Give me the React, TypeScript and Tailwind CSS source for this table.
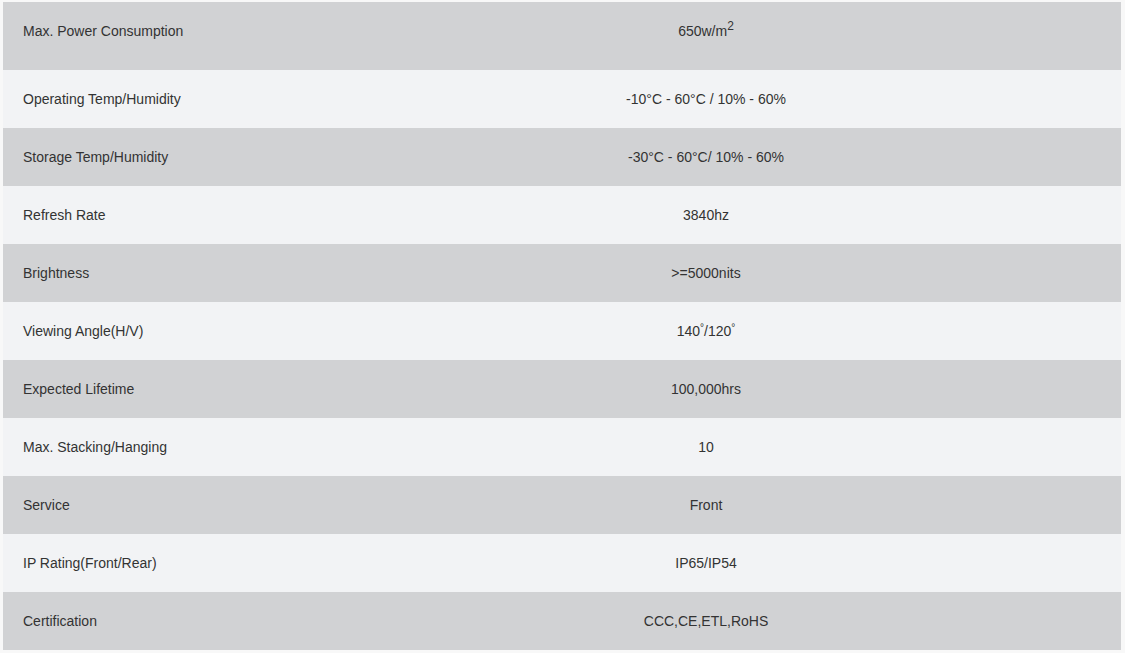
import React from "react";

const rows: { label: string; value: React.ReactNode }[] = [
  {
    label: "Max. Power Consumption",
    value: (
      <>
        650w/m<sup className="text-[12px]">2</sup>
      </>
    ),
  },
  { label: "Operating Temp/Humidity", value: "-10°C - 60°C / 10% - 60%" },
  { label: "Storage Temp/Humidity", value: "-30°C - 60°C/ 10% - 60%" },
  { label: "Refresh Rate", value: "3840hz" },
  { label: "Brightness", value: ">=5000nits" },
  {
    label: "Viewing Angle(H/V)",
    value: (
      <>
        140<sup className="text-[10px]">°</sup>/120<sup className="text-[10px]">°</sup>
      </>
    ),
  },
  { label: "Expected Lifetime", value: "100,000hrs" },
  { label: "Max. Stacking/Hanging", value: "10" },
  { label: "Service", value: "Front" },
  { label: "IP Rating(Front/Rear)", value: "IP65/IP54" },
  { label: "Certification", value: "CCC,CE,ETL,RoHS" },
];

export default function App() {
  return (
    <div
      className="min-h-[653px] bg-[#f8f8f8] pt-[2px] pl-[3px] pr-[4px] text-[14px] text-[#333333]"
      style={{ fontFamily: '"Liberation Sans", Arial, sans-serif' }}
    >
      <div className="flex flex-col">
        {rows.map((row, i) => (
          <div
            key={row.label}
            className={`flex ${i === 0 ? "h-[68px] items-start pt-[21px]" : "h-[58px] items-center"} ${
              i % 2 === 0 ? "bg-[#d1d2d4]" : "bg-[#f2f3f5]"
            }`}
          >
            <div className="w-[288px] pl-[20px] leading-[16px]">{row.label}</div>
            <div className="flex-1 text-center leading-[16px]">{row.value}</div>
          </div>
        ))}
      </div>
    </div>
  );
}
